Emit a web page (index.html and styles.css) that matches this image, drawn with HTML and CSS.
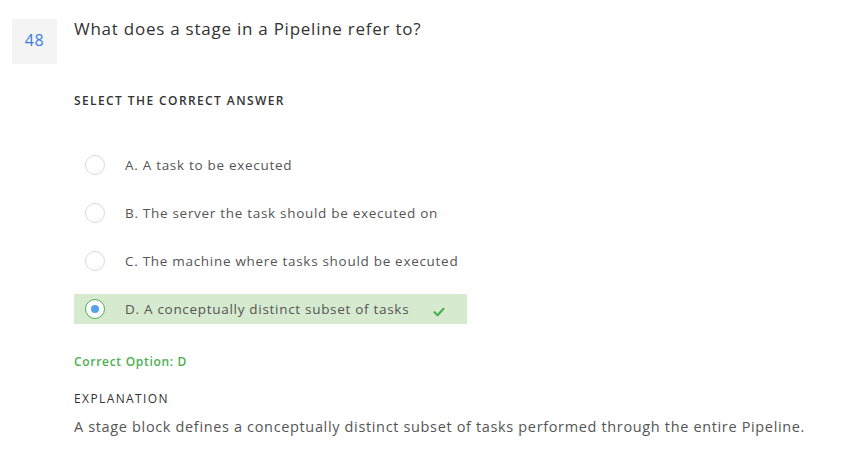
FILE: index.html
```html
<!DOCTYPE html>
<html>
<head>
<meta charset="utf-8">
<link rel="stylesheet" href="styles.css">
</head>
<body>
<div class="question">
  <div class="qnum">48</div>
  <div class="qbody">
    <h1 class="qtitle">What does a stage in a Pipeline refer to?</h1>
    <div class="label select-label">SELECT THE CORRECT ANSWER</div>
    <ul class="options">
      <li class="option"><span class="radio"></span><span class="opt-text">A. A task to be executed</span></li>
      <li class="option"><span class="radio"></span><span class="opt-text">B. The server the task should be executed on</span></li>
      <li class="option"><span class="radio"></span><span class="opt-text">C. The machine where tasks should be executed</span></li>
      <li class="option option-correct"><span class="radio radio-checked"><span class="dot"></span></span><span class="opt-text">D. A conceptually distinct subset of tasks</span>
        <svg class="check" width="12" height="10" viewBox="0 0 12 10"><path d="M1.5 5.2 L4.5 8.2 L10.5 1.8" fill="none" stroke="#4caf50" stroke-width="2.2" stroke-linecap="round" stroke-linejoin="round"/></svg>
      </li>
    </ul>
    <div class="correct">Correct Option: D</div>
    <div class="label expl-label">EXPLANATION</div>
    <p class="expl">A stage block defines a conceptually distinct subset of tasks performed through the entire Pipeline.</p>
  </div>
</div>
</body>
</html>
```
FILE: styles.css
```css
* { box-sizing: border-box; }
body {
  margin: 0;
  background: #fff;
  font-family: "Open Sans", "Liberation Sans", sans-serif;
  color: #555;
}
.question {
  display: flex;
  padding: 19px 0 0 12px;
}
.qnum {
  width: 45px;
  height: 45px;
  flex: none;
  background: #f4f4f4;
  color: #3b7ddd;
  font-size: 16px;
  letter-spacing: 0.5px;
  display: flex;
  align-items: center;
  justify-content: center;
  padding-bottom: 3px;
}
.qbody {
  margin-left: 17px;
}
.qtitle {
  margin: 0;
  font-size: 17px;
  font-weight: 400;
  color: #333;
  line-height: 22px;
  letter-spacing: 0.75px;
  position: relative;
  top: -1px;
}
.label {
  font-size: 12px;
  font-weight: 600;
  color: #333;
  letter-spacing: 1.4px;
}
.select-label {
  margin-top: 52px;
  line-height: 16px;
}
.options {
  list-style: none;
  margin: 41px 0 0 0;
  padding: 0;
}
.option {
  display: flex;
  align-items: center;
  height: 30px;
  margin-bottom: 18px;
  width: 393px;
  position: relative;
}
.radio {
  width: 20px;
  height: 20px;
  border: 1px solid #d9d9d9;
  border-radius: 50%;
  margin-left: 11px;
  flex: none;
  display: flex;
  align-items: center;
  justify-content: center;
  background: #fff;
}
.radio-checked {
  border-color: #4caf50;
}
.dot {
  width: 8px;
  height: 8px;
  border-radius: 50%;
  background: #55a3e8;
}
.opt-text {
  margin-left: 20px;
  font-size: 13.5px;
  letter-spacing: 0.7px;
  color: #555;
}
.option-correct {
  background: #d6eacf;
}
.check {
  position: absolute;
  left: 359px;
  top: 13px;
}
.correct {
  margin-top: 30px;
  font-size: 12px;
  font-weight: 600;
  color: #4caf50;
  line-height: 16px;
  letter-spacing: 0.7px;
}
.expl-label {
  margin-top: 21px;
  line-height: 16px;
  font-weight: 400;
}
.expl {
  margin: 10px 0 0 0;
  font-size: 14.5px;
  line-height: 20px;
  letter-spacing: 0.65px;
  color: #555;
}
```
